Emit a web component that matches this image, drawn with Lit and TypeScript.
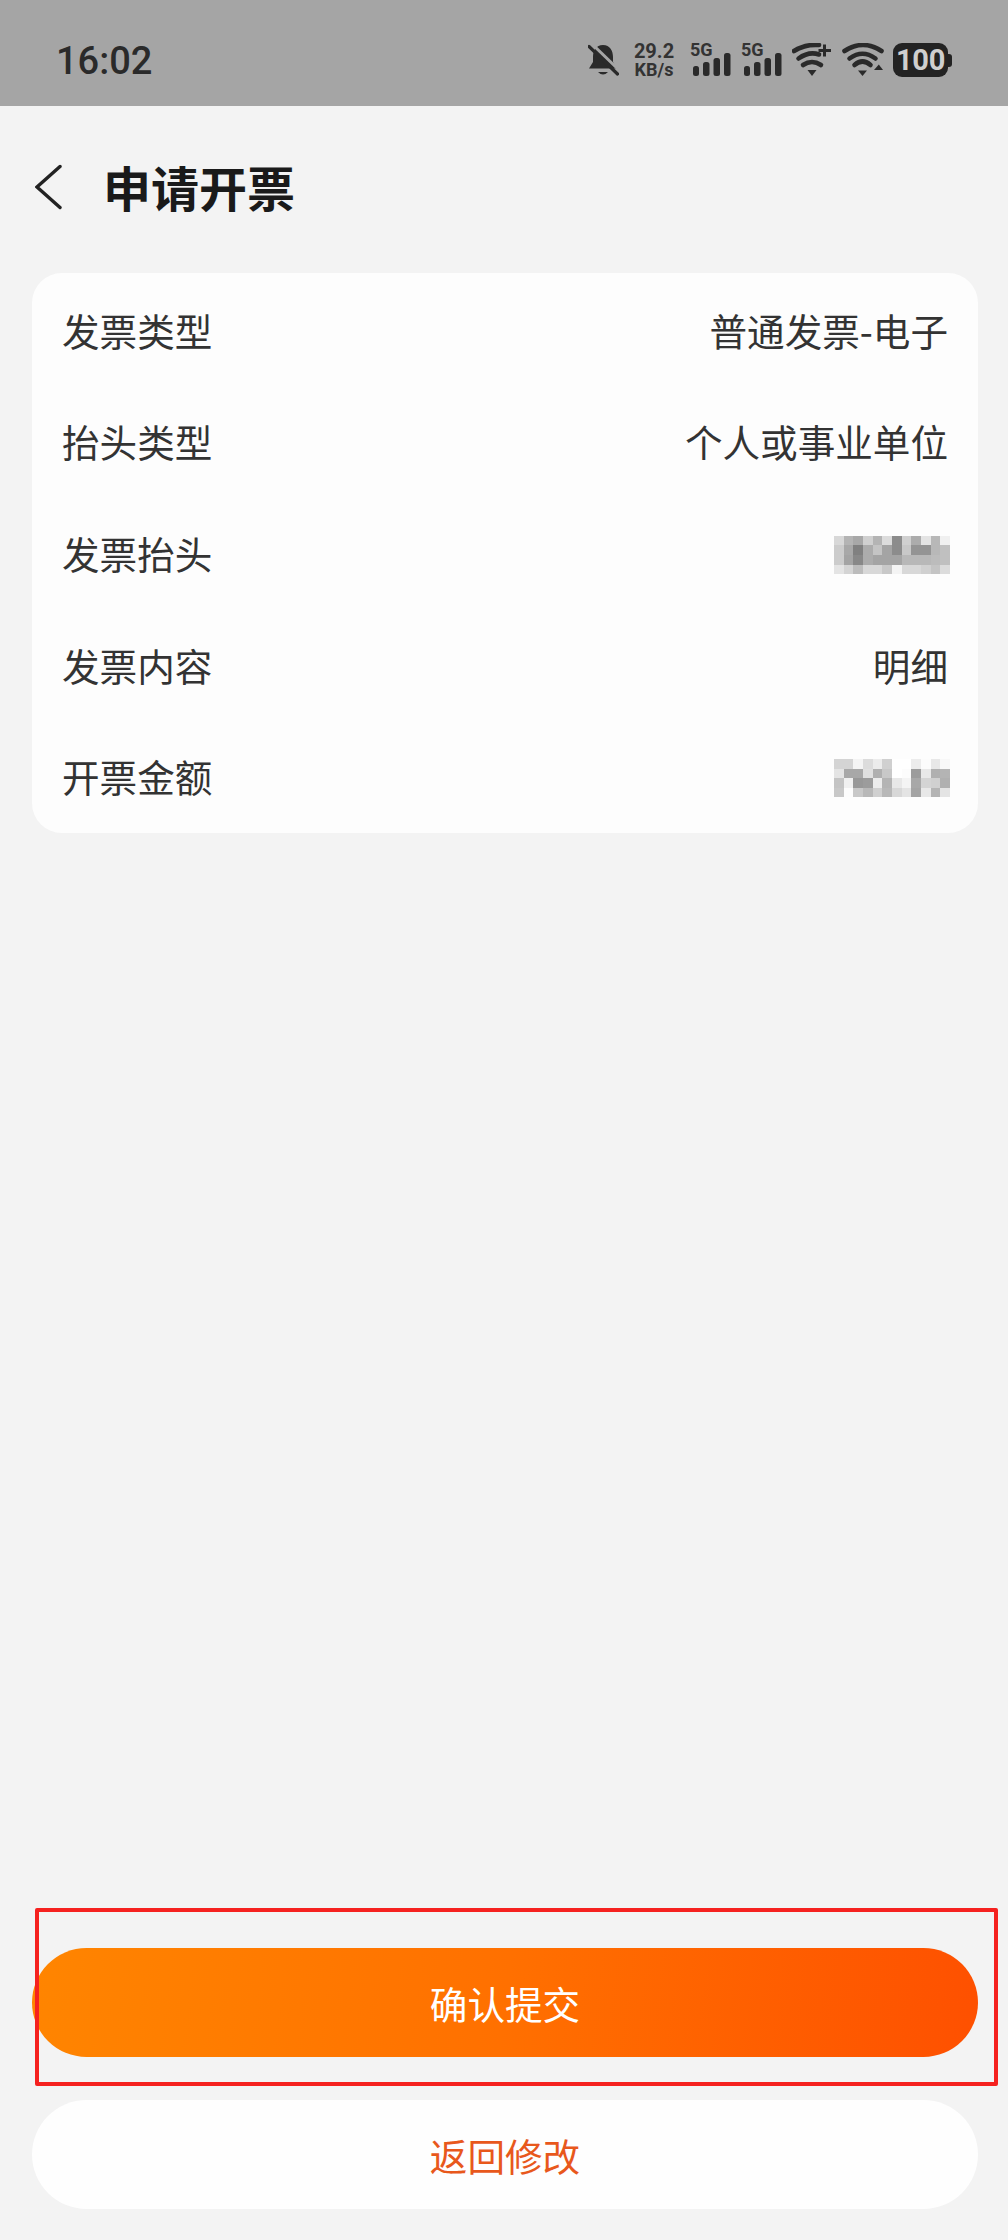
import { LitElement, html, css } from "lit";
import { customElement } from "lit/decorators.js";

const g = (s: string) => s.trim().split(/[\s\n]+/);
const MOSAIC_A = g(`d8 b4 a8 d0 b4 dc 8c d0 ac e4 b8 f0
cc a8 80 ac c4 a4 8c c8 94 94 b8 c0
cc a4 88 ac a4 a4 a4 b8 b8 b8 bc c0
e4 d4 bc d8 d8 c8 f4 d8 d8 d0 c4 dc`);
const MOSAIC_B = g(`d4 d4 f4 dc ec d0 ff ff ec fc e8 f8
e4 a8 a8 e0 b0 c8 ff fc 9c e8 b0 b4
c4 f0 98 9c ec b4 e8 f4 a8 d4 d0 b0
c8 fc c8 b8 d0 b8 d8 e4 a4 e8 b4 e4`);

const ROWS: [string, string | string[]][] = [
  ["发票类型", "普通发票-电子"],
  ["抬头类型", "个人或事业单位"],
  ["发票抬头", MOSAIC_A],
  ["发票内容", "明细"],
  ["开票金额", MOSAIC_B],
];

@customElement("app-root")
export class AppRoot extends LitElement {
  static styles = css`
    :host {
      display: block;
      width: 1008px;
      height: 2240px;
      overflow: hidden;
      background: #f3f3f3;
      font-family: "Noto Sans CJK SC", "Noto Sans", sans-serif;
      color: #333;
    }
    .page { display: flex; flex-direction: column; height: 2240px; }

    .status {
      height: 106px;
      box-sizing: border-box;
      background: #a5a5a5;
      display: flex;
      align-items: center;
      justify-content: space-between;
      padding: 14px 56px 0 56px;
      color: #2a2a2a;
      font-family: Roboto, "Noto Sans", sans-serif;
    }
    .time { font-size: 38px; font-weight: 500; line-height: 40px; margin-top: 1px; }
    .icons { display: flex; align-items: center; height: 36px; }
    .icons svg { display: block; fill: #2a2a2a; }
    .bell { margin-right: 15px; }
    .speed {
      display: flex; flex-direction: column; align-items: center;
      width: 40px; margin-right: 16px; font-weight: 700; color: #333;
    }
    .speed b { font-size: 20px; line-height: 20px; font-weight: 700; }
    .speed i { font-size: 18px; line-height: 18px; font-style: normal; font-weight: 700; }
    .net { display: grid; width: 41px; height: 34px; margin-right: 10px; }
    .net > * { grid-area: 1 / 1; }
    .net span { font-size: 18px; font-weight: 700; line-height: 14px; align-self: start; color: #333; }
    .net svg { align-self: end; }
    .wifi1 { margin-right: 10px; }
    .wifi2 { margin-right: 9px; }
    .wifi path.s { fill: none; stroke: #2a2a2a; stroke-width: 4.6; stroke-linecap: round; }
    .battery { display: flex; align-items: center; }
    .battery div {
      width: 55px; height: 34px; border-radius: 9px; background: #232323; color: #cfcfcf;
      display: flex; align-items: center; justify-content: center;
      font-size: 29px; font-weight: 700; letter-spacing: -0.3px;
    }
    .battery u { display: block; width: 4px; height: 13px; background: #232323; border-radius: 0 3px 3px 0; }

    .head { display: flex; align-items: center; height: 167px; box-sizing: border-box; padding: 0 0 0 35px; }
    .back { display: block; width: 28px; height: 46px; margin-right: 40px; margin-top: -5px; }
    .back path { fill: none; stroke: #222; stroke-width: 3.4; stroke-linecap: round; stroke-linejoin: miter; }
    h1 { margin: 0; font-size: 48px; font-weight: 700; color: #1a1a1a; line-height: 60px; margin-top: -8px; }

    .card {
      margin: 0 30px 0 32px;
      background: #fdfdfd;
      border-radius: 30px;
      padding: 1px 30px 0 30px;
      height: 560px;
      box-sizing: border-box;
    }
    .row { display: flex; justify-content: space-between; align-items: center; height: 111.6px; font-size: 37.6px; color: #333; }
    .row .k, .row .v { line-height: 50px; }
    .mosaic { display: grid; grid-template-columns: repeat(12, 9.67px); grid-auto-rows: 9.67px; margin: 4px -2px 0 0; filter: blur(0.7px); }

    .foot { margin-top: auto; padding: 0 30px 31px 32px; display: flex; flex-direction: column; gap: 43px; }
    .btn {
      position: relative; height: 109px; border-radius: 55px;
      display: flex; align-items: center; justify-content: center;
      font-size: 37.6px; line-height: 50px;
    }
    .primary { background: linear-gradient(97deg, #ff8500 0%, #ff7000 50%, #fe5000 100%); color: #fff; }
    .secondary { background: #fefefe; color: #e8581c; }
    .mark {
      position: absolute; left: 3px; right: -20px; top: -40px; bottom: -29px;
      border: 4px solid #f5211f; border-radius: 2px;
    }
  `;

  private mosaic(cells: string[]) {
    return html`<div class="mosaic">
      ${cells.map((c) => html`<span style="background:#${c}${c}${c}"></span>`)}
    </div>`;
  }

  private net() {
    return html`<div class="net">
      <span>5G</span>
      <svg width="41" height="24" viewBox="0 0 41 24">
        <rect x="3" y="13" width="6" height="10" rx="2.5" />
        <rect x="13" y="9" width="6.5" height="14" rx="2.5" />
        <rect x="23.5" y="5" width="6.5" height="18" rx="2.5" />
        <rect x="34" y="0" width="6.5" height="23" rx="2.5" />
      </svg>
    </div>`;
  }

  render() {
    return html`<div class="page">
      <div class="status">
        <div class="time">16:02</div>
        <div class="icons">
          <svg class="bell" width="31" height="33" viewBox="0 0 31 33">
            <path d="M15 1C8 1 5 7 5 13V18L1 24.5H29L25 18V13C25 7 22 1 15 1Z" />
            <path d="M10 28H20Q15 33 10 28Z" />
            <path d="M4 0L32 27" stroke="#a5a5a5" stroke-width="3" fill="none" />
            <path d="M1 2.5L29.5 30" stroke="#2a2a2a" stroke-width="3.2" stroke-linecap="round" fill="none" />
          </svg>
          <div class="speed"><b>29.2</b><i>KB/s</i></div>
          ${this.net()} ${this.net()}
          <svg class="wifi wifi1" width="40" height="34" viewBox="0 0 40 34">
            <path class="s" d="M2 8Q13 1 27 2" />
            <path class="s" d="M6.500 15.500Q17 8 27 11.500" />
            <path class="s" d="M11 22Q20 16 29 22" />
            <path d="M15.500 27H24.500L20 33Z" />
            <path d="M31 1.500H34V6H39V9H34V13.500H31V9H26.500V6H31Z" />
          </svg>
          <svg class="wifi wifi2" width="42" height="34" viewBox="0 0 42 34">
            <path class="s" d="M2.500 8Q21 -4 39.500 8" />
            <path class="s" d="M7.500 15.500Q20.500 6 33.500 15.500" />
            <path class="s" d="M12.500 22Q20.500 15 28.500 22" />
            <path d="M16 27.500H25L20.500 33Z" />
            <path d="M32 27H41L36.800 21.500Z" />
          </svg>
          <div class="battery"><div>100</div><u></u></div>
        </div>
      </div>

      <div class="head">
        <svg class="back" viewBox="0 0 28 46">
          <path d="M25 2.500L2 23L25 43.500" />
        </svg>
        <h1>申请开票</h1>
      </div>

      <div class="card">
        ${ROWS.map(
          ([k, v]) => html`<div class="row">
            <span class="k">${k}</span>
            ${Array.isArray(v) ? this.mosaic(v) : html`<span class="v">${v}</span>`}
          </div>`
        )}
      </div>

      <div class="foot">
        <div class="btn primary">确认提交<div class="mark"></div></div>
        <div class="btn secondary">返回修改</div>
      </div>
    </div>`;
  }
}
